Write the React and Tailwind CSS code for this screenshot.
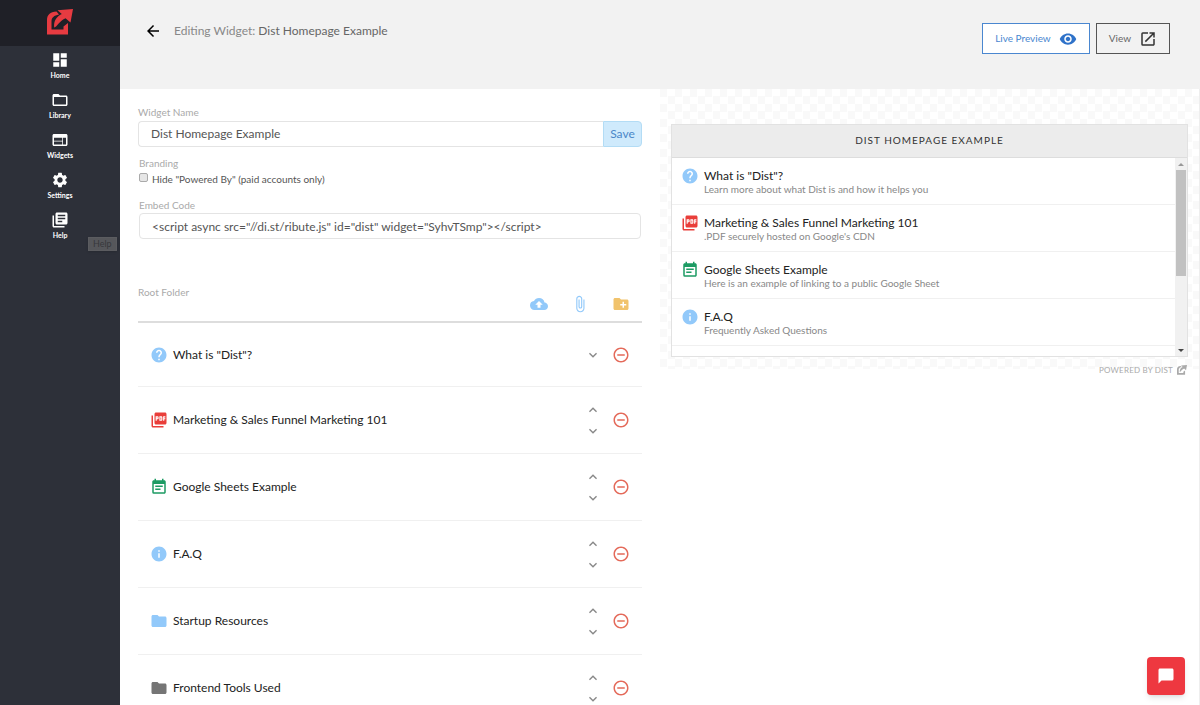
import {
  MdArrowBack,
  MdAttachFile,
  MdCloudUpload,
  MdCreateNewFolder,
  MdDashboard,
  MdEventNote,
  MdFolder,
  MdFolderOpen,
  MdHelp,
  MdInfo,
  MdKeyboardArrowDown,
  MdKeyboardArrowUp,
  MdLaunch,
  MdLibraryBooks,
  MdModeComment,
  MdPictureAsPdf,
  MdRemoveCircleOutline,
  MdRemoveRedEye,
  MdSettings,
  MdWeb,
} from "react-icons/md";

const NAV = [
  { label: "Home", Icon: MdDashboard },
  { label: "Library", Icon: MdFolderOpen },
  { label: "Widgets", Icon: MdWeb },
  { label: "Settings", Icon: MdSettings },
  { label: "Help", Icon: MdLibraryBooks },
];

const ITEMS = [
  {
    title: 'What is "Dist"?',
    description: "Learn more about what Dist is and how it helps you",
    Icon: MdHelp,
    color: "text-[#92c9fa]",
  },
  {
    title: "Marketing & Sales Funnel Marketing 101",
    description: ".PDF securely hosted on Google's CDN",
    Icon: MdPictureAsPdf,
    color: "text-[#e93e3a]",
  },
  {
    title: "Google Sheets Example",
    description: "Here is an example of linking to a public Google Sheet",
    Icon: MdEventNote,
    color: "text-[#1c9b63]",
  },
  {
    title: "F.A.Q",
    description: "Frequently Asked Questions",
    Icon: MdInfo,
    color: "text-[#92c9fa]",
  },
  { title: "Startup Resources", Icon: MdFolder, color: "text-[#92c9fa]" },
  { title: "Frontend Tools Used", Icon: MdFolder, color: "text-[#757575]" },
];

function Logo({ className }) {
  return (
    <svg viewBox="0 0 26 26" className={className} fill="currentColor" aria-hidden="true">
      <path d="M0 25.500V11C0 6 3 2.800 9.500 2.500L12 5.500C7 6.500 4.500 8.500 4.500 12.500V20.500H16.500V17.500L21 14V25.500Z" />
      <path d="M26 0 10.500 1.200 14.800 5C9.500 7.500 6.500 12 7.200 18.500C10.500 17.500 11.500 12.500 18.500 9.200L23.500 13.500Z" />
    </svg>
  );
}

function Sidebar() {
  return (
    <aside className="relative z-10 flex w-[120px] shrink-0 flex-col bg-[#2d3039]">
      <a href="#dist" aria-label="Dist" className="flex h-[46px] items-center justify-center bg-[#1f2027] pb-0.5 text-[#e73b41]">
        <Logo className="size-[26px]" />
      </a>
      <nav className="flex flex-col pt-[3px]">
        {NAV.map(({ label, Icon }) => (
          <a key={label} href={`#${label.toLowerCase()}`} className="flex h-10 flex-col items-center pt-0.5 text-[7px] leading-3 font-bold text-white">
            <Icon className="size-[18px]" />
            {label}
          </a>
        ))}
      </nav>
      <span role="tooltip" className="absolute top-[237px] left-[88px] border border-[#5b5c60] bg-[#56575b] px-1 text-[9px] leading-3 text-[#36373b] shadow">
        Help
      </span>
    </aside>
  );
}

function Header() {
  return (
    <header className="flex h-[89px] items-start justify-between bg-[#f2f2f2] pt-[22px] pr-[30px] pl-6">
      <div className="flex h-[18px] items-center gap-3 text-[12px] text-[#888]">
        <a href="#back" aria-label="Back" className="text-black">
          <MdArrowBack className="size-[18px]" />
        </a>
        <h1>
          Editing Widget: <span className="text-[#666]">Dist Homepage Example</span>
        </h1>
      </div>
      <div className="flex gap-1.5 pt-px text-[10px]">
        <button className="flex h-[31px] items-center gap-2 border border-[#4a87d0] bg-white px-3 text-[#4a87d0]">
          Live Preview
          <MdRemoveRedEye className="size-[18px] text-[#2f72c9]" />
        </button>
        <button className="flex h-[31px] items-center gap-2 border border-[#555] px-3 text-[#666]">
          View
          <MdLaunch className="size-[18px] text-[#333]" />
        </button>
      </div>
    </header>
  );
}

function ItemRow({ item, isFirst }) {
  const { title, Icon, color } = item;
  return (
    <li className="flex h-[67px] items-center border-b border-[#f0f0f0] px-3 first:h-16">
      <Icon className={`size-[18px] shrink-0 ${color}`} />
      <span className="ml-[5px] flex-1 text-[12px] text-[#222]">{title}</span>
      <div className="mr-[11px] flex flex-col gap-[5px] text-[#888]">
        {!isFirst && (
          <button aria-label={`Move ${title} up`}>
            <MdKeyboardArrowUp className="size-4" />
          </button>
        )}
        <button aria-label={`Move ${title} down`}>
          <MdKeyboardArrowDown className="size-4" />
        </button>
      </div>
      <button aria-label={`Remove ${title}`} className="text-[#e46a5a]">
        <MdRemoveCircleOutline className="size-[18px]" />
      </button>
    </li>
  );
}

function Editor() {
  return (
    <section className="px-[18px] pt-[15px]">
      <label htmlFor="name" className="mb-px block text-[10px] leading-4 text-[#aaa]">
        Widget Name
      </label>
      <div className="flex h-[26px]">
        <input
          id="name"
          defaultValue="Dist Homepage Example"
          className="min-w-0 flex-1 rounded-l-sm border border-r-0 border-[#e4e4e4] px-3 text-[12px] text-[#555] outline-none"
        />
        <button className="w-[39px] rounded-r-sm border border-[#b3dcf5] bg-[#cfeafc] text-[12px] text-[#4a87c8]">Save</button>
      </div>
      <div className="px-px">
        <p className="mt-2 text-[10px] leading-4 text-[#aaa]">Branding</p>
        <label className="flex h-4 items-center gap-1 text-[10px] text-[#555]">
          <input type="checkbox" className="mb-1 size-[9px] appearance-none rounded-xs border border-[#aaa] bg-[#e6e6e6]" />
          Hide "Powered By" (paid accounts only)
        </label>
        <label htmlFor="embed" className="mt-[10px] block text-[10px] leading-4 text-[#aaa]">
          Embed Code
        </label>
        <input
          id="embed"
          readOnly
          value={'<script async src="//di.st/ribute.js" id="dist" widget="SyhvTSmp"></script>'}
          className="block h-[26px] w-full rounded-sm border border-[#e4e4e4] px-3 text-[12px] text-[#555] outline-none"
        />
      </div>
      <div className="mt-[45px] flex h-[39px] items-start justify-between border-b-2 border-[#ddd] pr-3">
        <h2 className="text-[10px] leading-4 text-[#aaa]">Root Folder</h2>
        <div className="mt-[11px] flex gap-[23px] text-[#92c9fa]">
          <button aria-label="Upload file">
            <MdCloudUpload className="size-[18px]" />
          </button>
          <button aria-label="Attach link">
            <MdAttachFile className="size-[18px]" />
          </button>
          <button aria-label="New folder" className="text-[#f1c36c]">
            <MdCreateNewFolder className="size-[18px]" />
          </button>
        </div>
      </div>
      <ul>
        {ITEMS.map((item, i) => (
          <ItemRow key={item.title} item={item} isFirst={i === 0} />
        ))}
      </ul>
    </section>
  );
}

function ScrollBar() {
  return (
    <div aria-hidden="true" className="flex w-3 flex-col items-center bg-[#f1f1f1]">
      <span className="flex h-3 items-center">
        <span className="border-x-[3px] border-b-[3px] border-x-transparent border-b-[#999]" />
      </span>
      <span className="h-[106px] w-[10px] bg-[#c1c1c1]" />
      <span className="mt-auto flex h-3 items-center">
        <span className="border-x-[3px] border-t-[3px] border-x-transparent border-t-[#444]" />
      </span>
    </div>
  );
}

function Preview() {
  return (
    <section className="border-r border-[#eee]">
      <div className="bg-[repeating-conic-gradient(#ffffff_0_25%,#f9f9f9_0_50%)] bg-size-[15px_15px] px-[11px] pt-[35px] pb-3">
        <div className="border border-[#e2e2e2] bg-white">
          <h2 className="flex h-[33px] items-center justify-center border-b border-[#ddd] bg-[#ececec] pb-px text-[10px] tracking-widest text-[#333] uppercase">
            Dist Homepage Example
          </h2>
          <div className="flex h-[198px]">
            <ul className="flex-1">
              {ITEMS.filter((item) => item.description).map(({ title, description, Icon, color }) => (
                <li key={title} className="flex h-[47px] gap-[5px] border-b border-[#f0f0f0] pt-[9px] pl-[9px]">
                  <Icon className={`size-[18px] ${color}`} />
                  <div>
                    <p className="text-[12px] leading-[18px] text-[#222]">{title}</p>
                    <p className="-mt-1 text-[10px] leading-4 text-[#888]">{description}</p>
                  </div>
                </li>
              ))}
            </ul>
            <ScrollBar />
          </div>
        </div>
      </div>
      <a href="#dist" className="-mt-[5px] flex items-center justify-end gap-1 pr-3 text-[8px] leading-3 tracking-wide text-[#aaa]">
        POWERED BY DIST
        <Logo className="size-[10px]" />
      </a>
    </section>
  );
}

export default function App() {
  return (
    <div className="flex h-screen overflow-hidden bg-white font-['Lato',sans-serif]">
      <Sidebar />
      <main className="min-w-0 flex-1 overflow-y-auto [scrollbar-width:none]">
        <Header />
        <div className="grid grid-cols-2">
          <Editor />
          <Preview />
        </div>
      </main>
      <button
        aria-label="Open chat"
        className="fixed right-[15px] bottom-[10px] flex size-[38px] items-center justify-center rounded-sm bg-[#ee3840] text-white shadow-md"
      >
        <MdModeComment className="size-[18px] -scale-x-100" />
      </button>
    </div>
  );
}
